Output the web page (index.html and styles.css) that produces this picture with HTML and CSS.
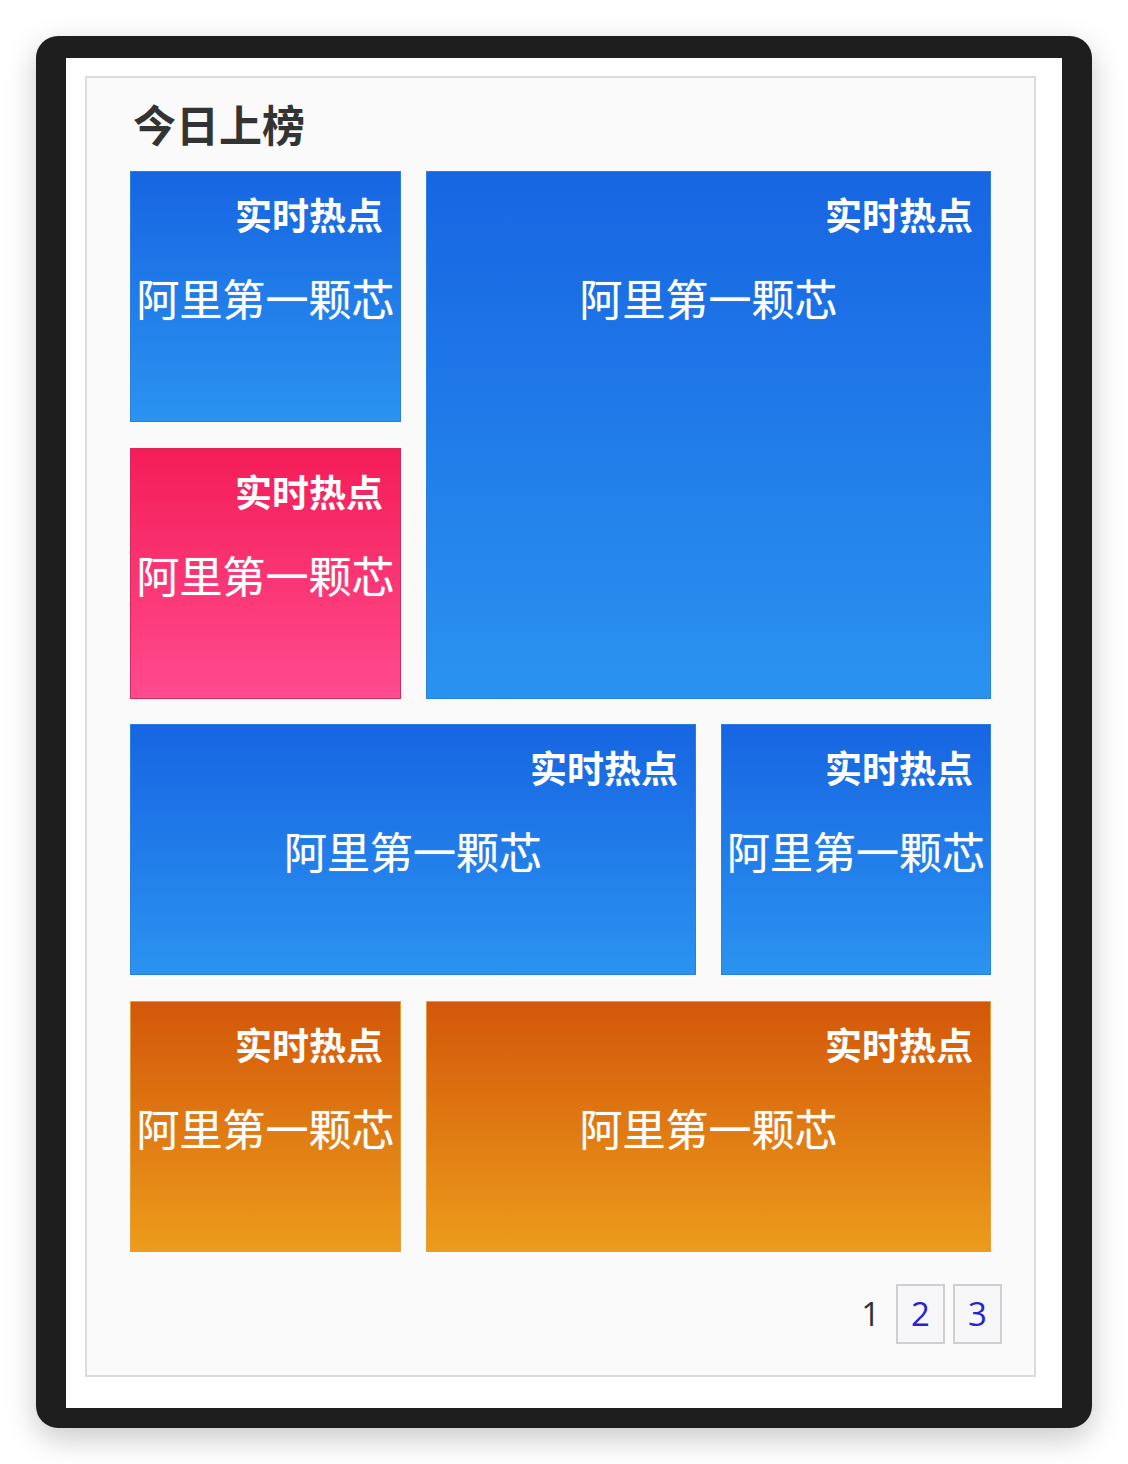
FILE: index.html
```html
<!DOCTYPE html>
<html lang="zh-CN">
<head>
<meta charset="utf-8">
<title>今日上榜</title>
<link rel="stylesheet" href="styles.css">
</head>
<body>
<div class="frame">
  <div class="screen">
    <section class="panel">
      <h2 class="title">今日上榜</h2>
      <div class="grid">
        <div class="tile blue"><div class="label">实时热点</div><div class="name">阿里第一颗芯</div></div>
        <div class="tile blue big"><div class="label">实时热点</div><div class="name">阿里第一颗芯</div></div>
        <div class="tile pink"><div class="label">实时热点</div><div class="name">阿里第一颗芯</div></div>
        <div class="tile blue wide"><div class="label">实时热点</div><div class="name">阿里第一颗芯</div></div>
        <div class="tile blue"><div class="label">实时热点</div><div class="name">阿里第一颗芯</div></div>
        <div class="tile orange"><div class="label">实时热点</div><div class="name">阿里第一颗芯</div></div>
        <div class="tile orange wide"><div class="label">实时热点</div><div class="name">阿里第一颗芯</div></div>
      </div>
      <div class="pager">
        <span class="page current">1</span>
        <a class="page box">2</a>
        <a class="page box">3</a>
      </div>
    </section>
  </div>
</div>
</body>
</html>
```
FILE: styles.css
```css
html, body {
  margin: 0;
  padding: 0;
  background: #ffffff;
}
body {
  width: 1128px;
  height: 1464px;
  font-family: "Noto Sans CJK SC", "Noto Sans", sans-serif;
}
.frame {
  margin: 36px 0 0 36px;
  width: 1056px;
  height: 1392px;
  box-sizing: border-box;
  padding: 22px 30px 20px 30px;
  background: #1e1e1e;
  border-radius: 22px;
  box-shadow: 0 10px 30px rgba(0,0,0,0.22);
}
.screen {
  width: 996px;
  height: 1350px;
  background: #ffffff;
  box-sizing: border-box;
  padding: 18px 26px 31px 19px;
}
.panel {
  width: 951px;
  height: 1301px;
  box-sizing: border-box;
  border: 2px solid #dcdcdc;
  background: #fafafa;
  padding: 22px 0 0 43px;
}
.title {
  margin: 0 0 25px 3px;
  font-size: 43px;
  line-height: 46px;
  font-weight: 700;
  color: #333333;
}
.grid {
  display: grid;
  width: 861px;
  grid-template-columns: 271px 270px 270px;
  grid-template-rows: repeat(4, 251px);
  column-gap: 25px;
  row-gap: 25.5px;
}
.tile {
  box-sizing: border-box;
  padding: 21px 17px 0 0;
  color: #ffffff;
  text-align: center;
  overflow: visible;
}
.big { grid-column: 2 / 4; grid-row: 1 / 3; }
.wide { grid-column: span 2; }
.blue {
  background: linear-gradient(#1765e2, #2a93f0);
  border: 1px solid #2a7fe0;
}
.pink {
  background: linear-gradient(#f41d57, #ff4b8f);
  border: 1px solid #d62a5c;
}
.orange {
  background: linear-gradient(#d3570a, #ec9c1b);
  border: 1px solid #e3a03a;
}
.label {
  text-align: right;
  font-size: 37px;
  line-height: 42px;
  font-weight: 700;
  letter-spacing: 0;
}
.name {
  margin: 39px -17px 0 0;
  font-size: 43px;
  line-height: 46px;
  white-space: nowrap;
  letter-spacing: 0;
  text-shadow: 0 0 1px rgba(255,255,255,0.6);
}
.pager {
  display: flex;
  justify-content: flex-end;
  align-items: center;
  gap: 8px;
  margin-top: 32px;
  padding-right: 32px;
  font-family: "Open Sans", "Noto Sans", sans-serif;
  font-size: 33px;
}
.page {
  display: flex;
  align-items: center;
  justify-content: center;
  height: 60px;
  box-sizing: border-box;
}
.current {
  color: #333333;
  margin-right: 8px;
}
.box {
  width: 49px;
  border: 2px solid #cfcfcf;
  background: #f7f7f9;
  color: #2424d0;
}
```
